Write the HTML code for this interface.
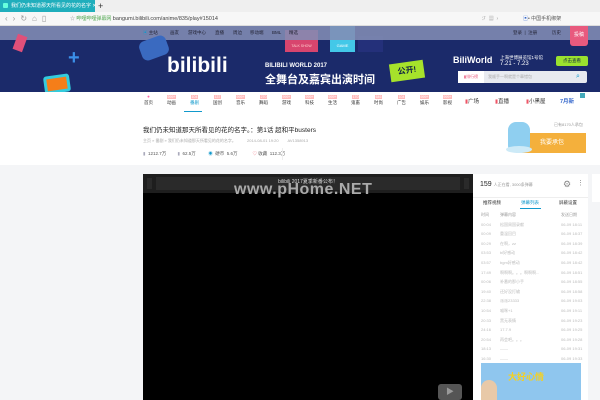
<!DOCTYPE html>
<html><head><meta charset="utf-8"><style>
*{margin:0;padding:0;box-sizing:border-box}
body{width:600px;height:400px;overflow:hidden;background:#f4f5f7;font-family:"Liberation Sans","Noto Sans CJK SC",sans-serif;font-size:5px;color:#555;position:relative}
.a{position:absolute;white-space:nowrap}
.cat span.i{width:23px;text-align:center;display:inline-block}
.b{background:#fbb;color:#fff;padding:0 1px;font-size:3.5px}
.row{display:flex;height:9.6px;line-height:9.6px}
.row span:nth-child(1){width:19px}
.row span:nth-child(2){width:61px;overflow:hidden}
.n{position:absolute;top:26px;line-height:14px;font-size:4.5px;color:#223}
</style></head><body>
<!-- tab bar -->
<div class="a" style="left:0;top:0;width:600px;height:12px;background:#efefef"></div>
<div class="a" style="left:0;top:0;width:95px;height:12px;background:#20aebc;color:#fff;font-size:5px;line-height:12px;padding-left:11px">我们仍未知道那天所看见的花的名字 ✕</div>
<div class="a" style="left:3px;top:3px;width:5px;height:5px;background:#6fd;border-radius:1px"></div>
<div class="a" style="left:98px;top:0;font-size:9px;line-height:12px;color:#333">+</div>
<!-- address bar -->
<div class="a" style="left:0;top:12px;width:600px;height:14px;background:#f7f7f7;border-bottom:1px solid #ddd"></div>
<div class="a" style="left:5px;top:12px;font-size:8px;line-height:14px;color:#999;letter-spacing:5px">‹›↻⌂▯</div>
<div class="a" style="left:70px;top:12px;line-height:14px;font-size:5px;color:#999">☆ <span style="color:#5a5">哔哩哔哩弹幕网</span> <span style="color:#444;font-size:5.5px">bangumi.bilibili.com/anime/835/play#15014</span></div>
<div class="a" style="left:523px;top:12px;line-height:14px;font-size:5px;color:#555"><span style="color:#36c">▣</span>• 中国手机绑架</div>
<div class="a" style="left:482px;top:12px;line-height:14px;font-size:5px;color:#999">ℱ &nbsp;▦ &nbsp;›</div>
<!-- banner -->
<div class="a" style="left:0;top:26px;width:600px;height:66px;background:#1b2a6a"></div>
<div class="a" style="left:285px;top:30px;width:33px;height:22px;background:#d8456e;color:#fcc;font-size:3.5px;text-align:center;padding-top:14px">TALK SHOW</div>
<div class="a" style="left:330px;top:26px;width:25px;height:26px;background:#43c8e8;color:#fff;font-size:4px;text-align:center;padding-top:17px">GAME</div>
<div class="a" style="left:358px;top:36px;width:25px;height:16px;background:#24307a"></div>
<div class="a" style="left:0;top:26px;width:600px;height:14px;background:rgba(130,140,180,0.88)"></div>
<div class="n" style="left:143px"><span style="color:#19c">▣</span> 主站</div>
<div class="n" style="left:170px">画友</div>
<div class="n" style="left:188px">游戏中心</div>
<div class="n" style="left:215px">直播</div>
<div class="n" style="left:233px">周边</div>
<div class="n" style="left:250px">移动端</div>
<div class="n" style="left:272px">BML</div>
<div class="n" style="left:289px">精选</div>
<div class="n" style="left:513px">登录 &nbsp;| &nbsp;注册</div>
<div class="n" style="left:552px">历史</div>
<div class="a" style="left:570px;top:26px;width:18px;height:20px;background:#e85a7e;color:#fff;font-size:5px;text-align:center;line-height:19px;border-radius:0 0 3px 3px">投稿</div>
<div class="a" style="left:140px;top:38px;width:28px;height:20px;background:#3a6ac0;border-radius:6px;transform:rotate(-20deg)"></div>
<div class="a" style="left:15px;top:35px;width:10px;height:16px;background:#e0507a;transform:rotate(20deg)"></div>
<div class="a" style="left:44px;top:75px;width:26px;height:18px;background:#f57e19;border:3px solid #3cd;border-radius:3px;transform:rotate(-8deg)"></div>
<div class="a" style="left:68px;top:47px;font-size:20px;color:#3b8fe8;font-weight:bold">+</div>
<div class="a" style="left:167px;top:54px;font-size:21px;color:#fff;font-weight:bold">bilibili</div>
<div class="a" style="left:265px;top:63px;font-size:6px;color:#fff;font-weight:bold">BILIBILI WORLD 2017</div>
<div class="a" style="left:265px;top:71px;font-size:11px;color:#fff;font-weight:bold">全舞台及嘉宾出演时间</div>
<div class="a" style="left:390px;top:62px;width:34px;height:18px;background:#a6e22b;color:#124;font-size:8px;font-weight:bold;text-align:center;line-height:18px;transform:rotate(-8deg)">公开!</div>
<div class="a" style="left:453px;top:55px;font-size:9px;color:#fff;font-weight:bold">BiliWorld</div>
<div class="a" style="left:500px;top:55px;font-size:4.5px;color:#fff;line-height:6px">上海世博展览馆1号馆<br><span style="font-size:6px">7.21 - 7.23</span></div>
<div class="a" style="left:556px;top:56px;width:32px;height:10px;background:#9be12f;color:#124;font-size:4.5px;text-align:center;line-height:10px;border-radius:2px">点击查看</div>
<div class="a" style="left:458px;top:71px;width:129px;height:12px;background:#e8eaf0;border-radius:2px"></div>
<div class="a" style="left:458px;top:71px;width:26px;height:12px;background:#fff;color:#e85a7e;font-size:4px;line-height:12px;text-align:center">▮排行榜</div>
<div class="a" style="left:488px;top:71px;font-size:4px;color:#aaa;line-height:12px">我顺手一啊就是个章错包</div>
<div class="a" style="left:576px;top:71px;font-size:7px;color:#19c;line-height:12px">⌕</div>
<!-- categories -->
<div class="a" style="left:0;top:92px;width:600px;height:73px;background:#fff"></div>
<div class="a cat" style="left:137px;top:94px;font-size:4.5px;color:#333;line-height:6px">
<span class="i" style="color:#f6a">●<br><span style="color:#333">首页</span></span><span class="i"><span class="b">999+</span><br>动画</span><span class="i" style="color:#19c"><span class="b">104</span><br>番剧</span><span class="i"><span class="b">137</span><br>国创</span><span class="i"><span class="b">999+</span><br>音乐</span><span class="i"><span class="b">270</span><br>舞蹈</span><span class="i"><span class="b">999+</span><br>游戏</span><span class="i"><span class="b">999+</span><br>科技</span><span class="i"><span class="b">999+</span><br>生活</span><span class="i"><span class="b">170</span><br>鬼畜</span><span class="i"><span class="b">646</span><br>时尚</span><span class="i"><span class="b">104</span><br>广告</span><span class="i"><span class="b">999+</span><br>娱乐</span><span class="i"><span class="b">999+</span><br>影视</span>
</div>
<div class="a" style="left:184px;top:111px;width:18px;height:1px;background:#19c"></div>
<div class="a" style="left:465px;top:97px;font-size:5.5px;color:#333"><span style="color:#e56">▮</span>广场</div>
<div class="a" style="left:495px;top:97px;font-size:5.5px;color:#333"><span style="color:#e56">▮</span>直播</div>
<div class="a" style="left:526px;top:97px;font-size:5.5px;color:#333"><span style="color:#e56">▮</span>小黑屋</div>
<div class="a" style="left:560px;top:97px;font-size:5.5px;color:#36c;font-weight:bold">7月新</div>
<div class="a" style="left:580px;top:93px;width:5px;height:5px;background:#4ab"></div>
<!-- title -->
<div class="a" style="left:143px;top:124px;font-size:6.5px;color:#222">我们仍未知道那天所看见的花的名字。：第1话 超和平busters</div>
<div class="a" style="left:143px;top:138px;font-size:4px;color:#aaa">主页 » 番剧 » 我们仍未知道那天所看见的花的名字。 &nbsp;&nbsp;&nbsp;&nbsp;&nbsp;&nbsp;&nbsp;&nbsp; 2014-08-01 19:20 &nbsp;&nbsp;&nbsp;&nbsp;&nbsp;&nbsp; AV1358913</div>
<div class="a" style="left:143px;top:151px;font-size:4.5px;color:#555"><span style="color:#aab">▮</span> &nbsp;1212.7万 &nbsp;&nbsp;&nbsp;&nbsp;&nbsp;&nbsp;&nbsp; <span style="color:#aab">▮</span> &nbsp;62.5万 &nbsp;&nbsp;&nbsp;&nbsp;&nbsp;&nbsp;&nbsp;&nbsp; <span style="color:#19c">◉</span> &nbsp;硬币 &nbsp;5.6万 &nbsp;&nbsp;&nbsp;&nbsp;&nbsp;&nbsp;&nbsp;&nbsp;&nbsp;&nbsp; <span style="color:#e56">♡</span> 收藏 &nbsp;112.3万</div>
<div class="a" style="left:282px;top:148px;width:1px;height:12px;background:#eee"></div>
<div class="a" style="left:554px;top:122px;font-size:4px;color:#999">已有8170人承包</div>
<div class="a" style="left:520px;top:133px;width:66px;height:20px;background:#f4b03c;color:#fff;font-size:6px;line-height:20px;padding-left:20px">我要承包</div>
<div class="a" style="left:508px;top:122px;width:22px;height:28px;background:#8fcff0;border-radius:8px 8px 4px 4px"></div>
<div class="a" style="left:506px;top:146px;width:26px;height:7px;background:#cdeaf7;border-radius:50%"></div>
<!-- player -->
<div class="a" style="left:143px;top:174px;width:330px;height:226px;background:#000"></div>
<div class="a" style="left:143px;top:174px;width:330px;height:19px;background:#1e1e1e"></div>
<div class="a" style="left:147px;top:178px;width:5px;height:11px;background:#2a2a2a"></div>
<div class="a" style="left:464px;top:178px;width:5px;height:11px;background:#2a2a2a"></div>
<div class="a" style="left:156px;top:177px;width:304px;height:13px;background:#2a2a2a"></div>
<div class="a" style="left:143px;top:178px;width:330px;text-align:center;font-size:5px;color:#ddd">bilibili 2017夏季新番公布！</div>
<div class="a" style="left:234px;top:181px;font-size:16px;color:#aaa;font-weight:bold;letter-spacing:0.5px">www.pHome.NET</div>
<div class="a" style="left:438px;top:384px;width:24px;height:16px;background:#555;border-radius:3px;color:#999;font-size:8px;text-align:center;line-height:16px">▶</div>
<!-- sidebar -->
<div class="a" style="left:473px;top:174px;width:115px;height:226px;background:#fff"></div>
<div class="a" style="left:480px;top:181px;font-size:7px;color:#222">159 <span style="font-size:4px;color:#999">人正在看, 3000条弹幕</span></div>
<div class="a" style="left:563px;top:179px;font-size:9px;color:#888">⚙</div>
<div class="a" style="left:577px;top:179px;font-size:7px;color:#888">⋮</div>
<div class="a" style="left:473px;top:197px;width:115px;border-top:1px solid #eee"></div>
<div class="a" style="left:483px;top:200px;font-size:4.5px;color:#333">推荐视频</div>
<div class="a" style="left:521px;top:200px;font-size:4.5px;color:#19c">弹幕列表</div>
<div class="a" style="left:559px;top:200px;font-size:4.5px;color:#333">屏蔽设置</div>
<div class="a" style="left:520px;top:208px;width:21px;height:1px;background:#19c"></div>
<div class="a" style="left:481px;top:210px;font-size:4px;color:#999">
<div class="row"><span>时间</span><span>弹幕内容</span><span>发送日期</span></div>
<div style="color:#bbb">
<div class="row"><span>00:04</span><span>松国周国录献</span><span>06-09 18:11</span></div>
<div class="row"><span>00:09</span><span>重温回目</span><span>06-09 18:37</span></div>
<div class="row"><span>00:29</span><span>在啊，zz</span><span>06-09 18:39</span></div>
<div class="row"><span>03:53</span><span>bl好感动</span><span>06-09 18:42</span></div>
<div class="row"><span>03:57</span><span>bgm好感动</span><span>06-09 18:42</span></div>
<div class="row"><span>17:49</span><span>啊啊啊。。。啊啊啊...</span><span>06-09 18:51</span></div>
<div class="row"><span>00:06</span><span>补番的那小手</span><span>06-09 18:55</span></div>
<div class="row"><span>19:40</span><span>还好没打输</span><span>06-09 18:58</span></div>
<div class="row"><span>22:38</span><span>派派23333</span><span>06-09 19:03</span></div>
<div class="row"><span>10:54</span><span>喵咪+1</span><span>06-09 19:11</span></div>
<div class="row"><span>20:33</span><span>黑无表情</span><span>06-09 19:23</span></div>
<div class="row"><span>24:16</span><span>17.7.9</span><span>06-09 19:25</span></div>
<div class="row"><span>20:54</span><span>再会吧。。。</span><span>06-09 19:28</span></div>
<div class="row"><span>18:13</span><span>——</span><span>06-09 19:31</span></div>
<div class="row"><span>16:30</span><span>——</span><span>06-09 19:33</span></div>
</div></div>
<div class="a" style="left:481px;top:363px;width:100px;height:37px;background:#8fc6ee"></div>
<div class="a" style="left:508px;top:370px;font-size:9px;color:#f5d020;font-weight:bold">大好心情</div>
<div class="a" style="left:481px;top:380px;width:16px;height:20px;background:#e8c9a8;border-radius:8px 8px 0 0"></div>
<div class="a" style="left:592px;top:174px;width:8px;height:28px;background:#fff"></div>
</body></html>
